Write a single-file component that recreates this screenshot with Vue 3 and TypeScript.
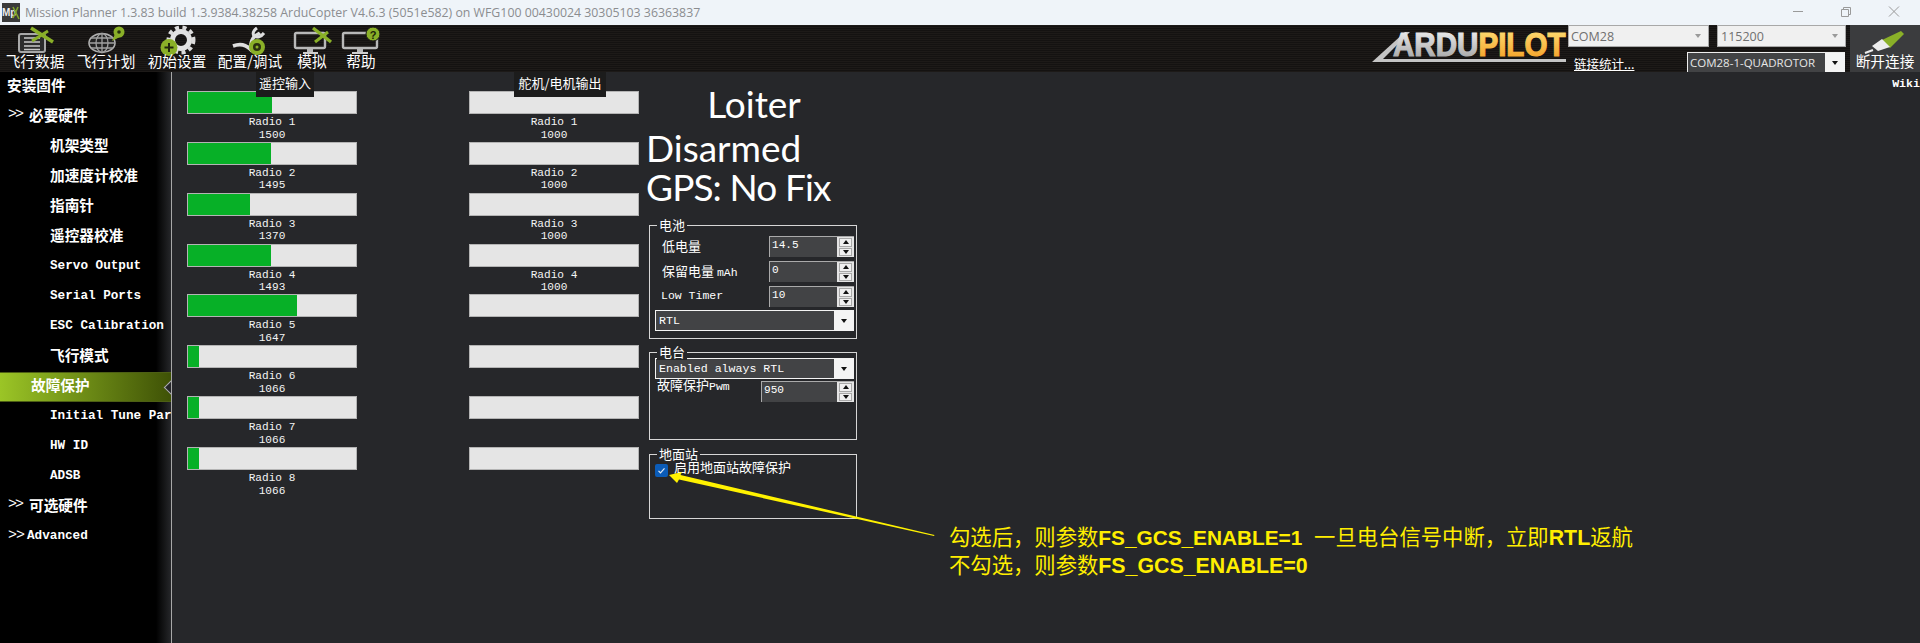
<script setup lang="ts">
interface NavItem {
  label: string
  kind: 'top' | 'group' | 'child' | 'active'
  mono?: boolean
}

const rcIn = [1500, 1495, 1370, 1493, 1647, 1066, 1066, 1066]
const servoOut: (number | null)[] = [1000, 1000, 1000, 1000, null, null, null, null]

const nav: NavItem[] = [
  { label: '安装固件', kind: 'top' },
  { label: '必要硬件', kind: 'group' },
  { label: '机架类型', kind: 'child' },
  { label: '加速度计校准', kind: 'child' },
  { label: '指南针', kind: 'child' },
  { label: '遥控器校准', kind: 'child' },
  { label: 'Servo Output', kind: 'child', mono: true },
  { label: 'Serial Ports', kind: 'child', mono: true },
  { label: 'ESC Calibration', kind: 'child', mono: true },
  { label: '飞行模式', kind: 'child' },
  { label: '故障保护', kind: 'active' },
  { label: 'Initial Tune Params', kind: 'child', mono: true },
  { label: 'HW ID', kind: 'child', mono: true },
  { label: 'ADSB', kind: 'child', mono: true },
  { label: '可选硬件', kind: 'group' },
  { label: 'Advanced', kind: 'group', mono: true },
]

const fill = (v: number | null) => `${v === null ? 0 : (v - 1000) / 10}%`
</script>

<template>
  <div class="app">
    <header class="titlebar">
      <div class="app-icon">
        <span>Mp</span>
        <svg width="18" height="19" viewBox="0 0 18 19"><path d="M11 4l6 12M16 4l-5 11" stroke="#7fa52a" stroke-width="1.6" fill="none" /></svg>
      </div>
      <span class="title">Mission Planner 1.3.83 build 1.3.9384.38258 ArduCopter V4.6.3 (5051e582) on WFG100 00430024 30305103 36363837</span>
      <div class="win-btns">
        <svg width="48" height="25" viewBox="0 0 48 25"><path d="M19 11.5h10" stroke="#9a9a9a" /></svg>
        <svg width="48" height="25" viewBox="0 0 48 25"><path d="M19.5 9.5h7v7h-7zM21.5 9.5v-2h7v7h-2" stroke="#9a9a9a" fill="none" /></svg>
        <svg width="48" height="25" viewBox="0 0 48 25"><path d="M19 6.5l10 10M29 6.5l-10 10" stroke="#9a9a9a" fill="none" /></svg>
      </div>
    </header>

    <nav class="toolbar">
      <div class="tools">
        <div class="tool">
          <svg width="70" height="27" viewBox="0 26 70 27">
            <rect x="19" y="34" width="26" height="18" rx="2" fill="#2c2c2c" stroke="#a8a8a8" stroke-width="2" />
            <path d="M24 38h16M24 42h16M24 46h16M24 49.500h16" stroke="#c8c8c8" stroke-width="1.600" />
            <path d="M31 28l22 14" stroke="#8ab028" stroke-width="3.500" />
            <path d="M32 41l16-10" stroke="#8ab028" stroke-width="3" />
          </svg>
          <span>飞行数据</span>
        </div>
        <div class="tool">
          <svg width="72" height="27" viewBox="70 26 72 27">
            <ellipse cx="102" cy="43" rx="13" ry="9.500" fill="#222" stroke="#b0b0b0" stroke-width="1.600" />
            <ellipse cx="102" cy="43" rx="6" ry="9.500" fill="none" stroke="#a0a0a0" stroke-width="1.300" />
            <path d="M102 33.500v19M89 43h26M91 38h22M91 48h22" stroke="#a0a0a0" stroke-width="1.300" />
            <path d="M112 41l3-7 7 2z" fill="#8ab028" />
            <circle cx="119" cy="32" r="5.500" fill="#8ab028" />
            <circle cx="119" cy="32" r="1.800" fill="#26300c" />
          </svg>
          <span>飞行计划</span>
        </div>
        <div class="tool">
          <svg width="70" height="27" viewBox="142 26 70 27">
            <circle cx="181" cy="40" r="8.500" fill="none" stroke="#e2e2e2" stroke-width="5" />
            <circle cx="181" cy="40" r="12.500" fill="none" stroke="#dcdcdc" stroke-width="4" stroke-dasharray="4 3.500" />
            <circle cx="169" cy="47.500" r="8.500" fill="#8ab028" />
            <path d="M164.500 47.500h9M169 43v9" stroke="#20260c" stroke-width="2" />
          </svg>
          <span>初始设置</span>
        </div>
        <div class="tool">
          <svg width="76" height="27" viewBox="212 26 76 27">
            <path d="M233 46c8-3 14 0 17 3 1-5 1-9 4-12 2-2 5-3 6-4" fill="none" stroke="#dedede" stroke-width="3.500" />
            <path d="M257 28c-3 2-5 5-3 8 3 2 7 1 10-3" fill="none" stroke="#dedede" stroke-width="3" />
            <circle cx="257" cy="47" r="6" fill="#2a300f" stroke="#8ab028" stroke-width="4" />
            <circle cx="257" cy="47" r="1.500" fill="#8ab028" />
          </svg>
          <span>配置/调试</span>
        </div>
        <div class="tool">
          <svg width="48" height="27" viewBox="288 26 48 27">
            <rect x="295" y="33" width="30" height="15" rx="1.500" fill="none" stroke="#b8b8b8" stroke-width="2.400" />
            <path d="M307 48h6v4h-6z" fill="#b8b8b8" />
            <path d="M303 53h15" stroke="#cfcfcf" stroke-width="2" />
            <path d="M313 28l18 14" stroke="#8ab028" stroke-width="3.400" />
            <path d="M315 42l13-10" stroke="#8ab028" stroke-width="3" />
          </svg>
          <span>模拟</span>
        </div>
        <div class="tool">
          <svg width="50" height="27" viewBox="336 26 50 27">
            <rect x="343" y="33" width="34" height="15" rx="1.500" fill="none" stroke="#b8b8b8" stroke-width="2.400" />
            <path d="M357 48h6v4h-6z" fill="#b8b8b8" />
            <path d="M352 53h16" stroke="#cfcfcf" stroke-width="2" />
            <circle cx="373" cy="34" r="7" fill="#8ab028" stroke="#1a1816" />
            <text x="373" y="38.500" class="qmark">?</text>
          </svg>
          <span>帮助</span>
        </div>
      </div>

      <div class="tb-right">
        <svg class="logo" width="198" height="47" viewBox="1370 25 198 47">
          <defs>
            <linearGradient id="silver" x1="0" y1="0" x2="0" y2="1">
              <stop offset="0" stop-color="#f6f6f6" />
              <stop offset="1" stop-color="#9c9c9c" />
            </linearGradient>
            <linearGradient id="gold" x1="0" y1="0" x2="0" y2="1">
              <stop offset="0" stop-color="#ffe27a" />
              <stop offset="1" stop-color="#f39a1e" />
            </linearGradient>
          </defs>
          <path d="M1372 62l33-30h5l-27 27h183v3z" fill="#c4c4c4" />
          <text transform="translate(1393 56) scale(.896 1)" class="logo-txt"><tspan fill="url(#silver)" stroke="url(#silver)">ARDU</tspan><tspan fill="url(#gold)" stroke="url(#gold)">PILOT</tspan></text>
        </svg>
        <div class="conn">
          <div class="conn-top">
            <div class="port p1"><span>COM28</span><i class="tri grey" /></div>
            <div class="port p2"><span>115200</span><i class="tri grey" /></div>
          </div>
          <div class="conn-bottom">
            <a class="stats">链接统计...</a>
            <div class="vehicle"><span>COM28-1-QUADROTOR</span><b><i class="tri" /></b></div>
          </div>
        </div>
        <div class="connect">
          <svg width="70" height="27" viewBox="1850 26 70 27">
            <path d="M1882 40l19-9 3 3-14 14z" fill="#8ab028" />
            <path d="M1872 46l10-7 8 8-12 4z" fill="#ececec" />
            <path d="M1873 50l-8 3" stroke="#ececec" stroke-width="2" />
          </svg>
          <span>断开连接</span>
        </div>
      </div>
    </nav>

    <main class="main">
      <aside class="sidebar">
        <div v-for="item in nav" :key="item.label" class="nav-row" :class="[item.kind, { mono: item.mono }]">
          <span v-if="item.kind === 'group'" class="chev">&gt;&gt;</span>
          <span>{{ item.label }}</span>
        </div>
      </aside>

      <section class="panel">
        <div class="gauges">
          <div class="tag tag-in">遥控输入</div>
          <div v-for="(v, i) in rcIn" :key="i" class="gauge">
            <div class="bar"><div class="bar-fill" :style="{ width: fill(v) }" /></div>
            <div class="g-label">Radio {{ i + 1 }}</div>
            <div class="g-label">{{ v }}</div>
          </div>
        </div>

        <div class="gauges second">
          <div class="tag tag-out">舵机/电机输出</div>
          <div v-for="(v, i) in servoOut" :key="i" class="gauge">
            <div class="bar"><div class="bar-fill" :style="{ width: fill(v) }" /></div>
            <template v-if="v !== null">
              <div class="g-label">Radio {{ i + 1 }}</div>
              <div class="g-label">{{ v }}</div>
            </template>
          </div>
        </div>

        <div class="status">
          <div class="mode">Loiter</div>
          <div class="state">Disarmed</div>
          <div class="state gps">GPS: No Fix</div>

          <div class="group g-batt">
            <span class="legend">电池</span>
            <div class="field">
              <label>低电量</label>
              <div class="spin"><span>14.5</span><div class="spin-btns"><b><i class="tri up" /></b><b><i class="tri" /></b></div></div>
            </div>
            <div class="field">
              <label>保留电量 <em>mAh</em></label>
              <div class="spin"><span>0</span><div class="spin-btns"><b><i class="tri up" /></b><b><i class="tri" /></b></div></div>
            </div>
            <div class="field">
              <label class="latin">Low Timer</label>
              <div class="spin"><span>10</span><div class="spin-btns"><b><i class="tri up" /></b><b><i class="tri" /></b></div></div>
            </div>
            <div class="combo"><span>RTL</span><b><i class="tri" /></b></div>
          </div>

          <div class="group g-radio">
            <span class="legend">电台</span>
            <div class="combo"><span>Enabled always RTL</span><b><i class="tri" /></b></div>
            <div class="field pwm">
              <label>故障保护<em>Pwm</em></label>
              <div class="spin wide"><span>950</span><div class="spin-btns"><b><i class="tri up" /></b><b><i class="tri" /></b></div></div>
            </div>
          </div>

          <div class="group g-gcs">
            <span class="legend">地面站</span>
            <div class="check-row">
              <span class="check">
                <svg width="13" height="13" viewBox="0 0 13 13"><path d="M3.500 6.800l2 2 4-4.500" stroke="#dfeaf7" stroke-width="1.200" fill="none" /></svg>
              </span>
              <label>启用地面站故障保护</label>
            </div>
          </div>
        </div>

        <div class="wiki">Wiki</div>

        <svg class="arrow" width="1920" height="643" viewBox="0 0 1920 643">
          <path d="M669 475l13-3-1.500 3 254 60-.5 1-255-56.500-2 3.500z" fill="#fff200" />
        </svg>
        <div class="note">
          <div>勾选后，则参数<b class="fs">FS_GCS_ENABLE=1</b> 一旦电台信号中断，立即<b>RTL</b>返航</div>
          <div>不勾选，则参数<b>FS_GCS_ENABLE=0</b></div>
        </div>
      </section>
    </main>
  </div>
</template>

<style scoped>
.app {
  width: 1920px;
  height: 643px;
  overflow: hidden;
  display: flex;
  flex-direction: column;
  font-family: "Noto Sans CJK SC", sans-serif;
  color: #fff;
  background: #26272a;
}

.titlebar {
  height: 25px;
  flex: none;
  display: flex;
  align-items: center;
  background: #eff4f9;
}

.app-icon {
  position: relative;
  width: 18px;
  height: 19px;
  margin-left: 2px;
  background: #3a3a3a;
  color: #eee;
  font: 700 10px/19px "Liberation Sans", sans-serif;
}

.app-icon svg {
  position: absolute;
  left: 0;
  top: 0;
}

.title {
  margin-left: 5px;
  font: 12.330px "Open Sans", sans-serif;
  color: #8b8d90;
  white-space: nowrap;
}

.win-btns {
  margin-left: auto;
  margin-right: 2px;
  display: flex;
}

.toolbar {
  height: 47px;
  flex: none;
  display: flex;
  background: repeating-linear-gradient(180deg, #1d1a18 0 1px, #141211 1px 2px);
}

.tools {
  display: grid;
  grid-template-columns: 70px 72px 70px 76px 48px 50px;
}

.tool {
  display: flex;
  flex-direction: column;
  align-items: center;
  padding-top: 1px;
  font-size: 14.67px;
  line-height: 16px;
}

.tool svg {
  display: block;
  overflow: visible;
}

.qmark {
  font: 700 11px "Liberation Sans", sans-serif;
  text-anchor: middle;
  fill: #1d2408;
}

.tb-right {
  margin-left: auto;
  display: flex;
}

.logo {
  display: block;
}

.logo-txt {
  font: 700 33px "Liberation Sans", sans-serif;
  stroke-width: 1.200px;
}

.conn {
  width: 282px;
}

.conn-top {
  display: flex;
  gap: 8px;
}

.port {
  height: 22px;
  box-sizing: border-box;
  display: flex;
  align-items: center;
  justify-content: space-between;
  padding: 0 7px 0 2px;
  background: #f0f0f0;
  border: 1.500px solid #a8a8a8;
  color: #6f6f6f;
  font: 12.500px "Open Sans", sans-serif;
}

.p1 {
  width: 141px;
}

.p2 {
  width: 129px;
  padding-left: 3px;
}

.conn-bottom {
  display: flex;
  align-items: flex-end;
  margin-top: 5px;
  height: 20px;
}

.stats {
  margin-left: 6px;
  width: 113px;
  font-size: 12.500px;
  line-height: 16px;
  color: #fff;
  text-decoration: underline;
}

.vehicle {
  width: 158px;
  height: 20px;
  box-sizing: border-box;
  display: flex;
  border-left: 1px solid #eee;
  border-top: 1px solid #eee;
  background: #424345;
  font: 11.500px/19px "Open Sans", sans-serif;
  color: #e6e6e6;
  white-space: nowrap;
}

.vehicle span {
  flex: 1;
  padding-left: 2px;
  overflow: hidden;
}

.vehicle b {
  flex: none;
  width: 20px;
  display: flex;
  align-items: center;
  justify-content: center;
  background: #f4f4f4;
}

.connect {
  width: 70px;
  display: flex;
  flex-direction: column;
  align-items: center;
  padding-top: 1px;
  background: #3b3c3e;
  font-size: 14.67px;
  line-height: 16px;
}

.connect svg {
  display: block;
  overflow: visible;
}

.tri {
  display: block;
  width: 0;
  height: 0;
  border-left: 3.500px solid transparent;
  border-right: 3.500px solid transparent;
  border-top: 4px solid #111;
}

.tri.up {
  border-top: 0;
  border-bottom: 4px solid #111;
}

.tri.grey {
  border-top-color: #9a9a9a;
}

.main {
  flex: 1;
  display: flex;
  min-height: 0;
}

.sidebar {
  width: 171px;
  flex: none;
  overflow: hidden;
  background: linear-gradient(90deg, #000 0 156px, #26272a 171px);
  font-weight: 700;
  font-size: 14.67px;
}

.nav-row {
  position: relative;
  height: 30px;
  box-sizing: border-box;
  padding-bottom: 6px;
  display: flex;
  align-items: center;
  white-space: nowrap;
}

.nav-row.mono {
  padding-bottom: 3px;
  font-family: "Liberation Mono", monospace;
  font-size: 12.670px;
}

.top {
  padding-left: 7px;
}

.child {
  padding-left: 50px;
}

.group {
  padding-left: 8px;
}

.chev {
  width: 21px;
  flex: none;
  font: 400 15px "Liberation Mono", monospace;
  letter-spacing: -2px;
}

.group.mono .chev {
  width: 19px;
  letter-spacing: -1px;
}

.active {
  padding-left: 31px;
  background: linear-gradient(90deg, #9bc526 0, #3f5206 100%);
  box-shadow: inset 0 1px #4d5f14, inset 0 -1px #4d5f14;
}

.active::after {
  content: "";
  position: absolute;
  right: -6px;
  top: 10px;
  width: 10px;
  height: 10px;
  background: #26272a;
  border-left: 1px solid #b0b0b0;
  border-bottom: 1px solid #b0b0b0;
  transform: rotate(45deg);
}

.panel {
  flex: 1;
  position: relative;
  display: flex;
  border-left: 1px solid #a8a8a8;
}

.gauges {
  position: relative;
  width: 170px;
  margin-left: 15px;
  padding-top: 19px;
}

.gauges.second {
  margin-left: 112px;
}

.tag {
  position: absolute;
  top: 0;
  height: 25px;
  box-sizing: border-box;
  background: #1c1c1c;
  font-size: 13px;
  line-height: 22px;
  text-align: center;
  white-space: nowrap;
}

.tag-in {
  left: 69px;
  width: 58px;
}

.tag-out {
  left: 45px;
  width: 92px;
}

.gauge {
  height: 50.860px;
}

.bar {
  height: 23px;
  box-sizing: border-box;
  border: 1px solid #b4b4b4;
  background: #e5e5e5;
  margin-bottom: 2px;
}

.bar-fill {
  height: 100%;
  background: #07b027;
}

.g-label {
  font: 11.100px/12.500px "Liberation Mono", monospace;
  text-align: center;
  color: #f4f4f4;
}

.status {
  width: 214px;
  margin-left: 8px;
}

.mode {
  box-sizing: border-box;
  height: 56px;
  padding-top: 10px;
  font: 37px/44px Lato, sans-serif;
  text-align: center;
}

.state {
  height: 39px;
  margin-left: -1px;
  font: 37px/39px Lato, sans-serif;
  white-space: nowrap;
}

.state.gps {
  letter-spacing: -0.900px;
}

.group.g-batt,
.group.g-radio,
.group.g-gcs {
  position: relative;
  width: 208px;
  margin-left: 2px;
  box-sizing: border-box;
  border: 1px solid #d6d6d6;
  font-size: 13px;
}

.g-batt {
  height: 114px;
  margin-top: 19px;
  padding: 10px 2px 0 5px;
}

.g-radio {
  height: 88px;
  margin-top: 13px;
  padding: 5px 2px 0 5px;
}

.g-gcs {
  height: 65px;
  margin-top: 14px;
  padding: 9px 2px 0 5px;
}

.legend {
  position: absolute;
  top: -9px;
  left: 7px;
  padding: 0 2px;
  background: #26272a;
  line-height: 16px;
}

.field {
  display: flex;
  align-items: center;
  height: 21px;
  margin-bottom: 4px;
  padding-left: 7px;
}

.field label {
  padding-bottom: 3px;
}

.field em,
.latin {
  font: 11.500px "Liberation Mono", monospace;
}

.latin {
  margin-left: -1px;
}

.field.pwm {
  margin-top: 2px;
  padding-left: 2px;
  align-items: flex-start;
}

.field.pwm label {
  line-height: 14px;
  margin-top: -3px;
}

.spin {
  margin-left: auto;
  width: 85px;
  height: 21px;
  box-sizing: border-box;
  display: flex;
  background: #424345;
  border-top: 1px solid #aaa;
  border-left: 1px solid #aaa;
  font: 11.100px/16px "Liberation Mono", monospace;
}

.spin.wide {
  width: 93px;
}

.spin span {
  flex: 1;
  padding-left: 2px;
}

.spin-btns {
  width: 17px;
  flex: none;
  display: flex;
  flex-direction: column;
  gap: 1px;
  padding: 1px 2px;
  box-sizing: border-box;
  background: #e4e4e4;
}

.spin-btns b {
  flex: 1;
  display: flex;
  align-items: center;
  justify-content: center;
  background: #f0f0f0;
  border: 1px solid #a8a8a8;
}

.combo {
  height: 21px;
  box-sizing: border-box;
  display: flex;
  margin-top: -1px;
  background: #424345;
  border: 1px solid #f4f4f4;
  font: 11.600px/19px "Liberation Mono", monospace;
}

.g-radio .combo {
  margin-top: 0;
}

.combo span {
  flex: 1;
  padding-left: 3px;
}

.combo b {
  width: 19px;
  display: flex;
  align-items: center;
  justify-content: center;
  background: #f4f4f4;
}

.check-row {
  display: flex;
  gap: 6px;
}

.check {
  width: 13px;
  height: 13px;
  flex: none;
  border-radius: 2px;
  background: #0b5cb8;
}

.check svg {
  display: block;
}

.check-row label {
  line-height: 12px;
  margin-top: -3px;
}

.wiki {
  margin-left: auto;
  padding-top: 5px;
  font: 700 11.600px/14px "Liberation Mono", monospace;
}

.arrow {
  position: absolute;
  left: -172px;
  top: -72px;
  pointer-events: none;
}

.note {
  position: absolute;
  left: 777px;
  top: 451px;
  font-size: 21.330px;
  line-height: 25px;
  color: #ffee00;
  white-space: nowrap;
}

.note b {
  font-family: "Liberation Sans", sans-serif;
  font-weight: 700;
}

.note .fs {
  font-size: 20.800px;
  margin-right: 7px;
}
</style>
